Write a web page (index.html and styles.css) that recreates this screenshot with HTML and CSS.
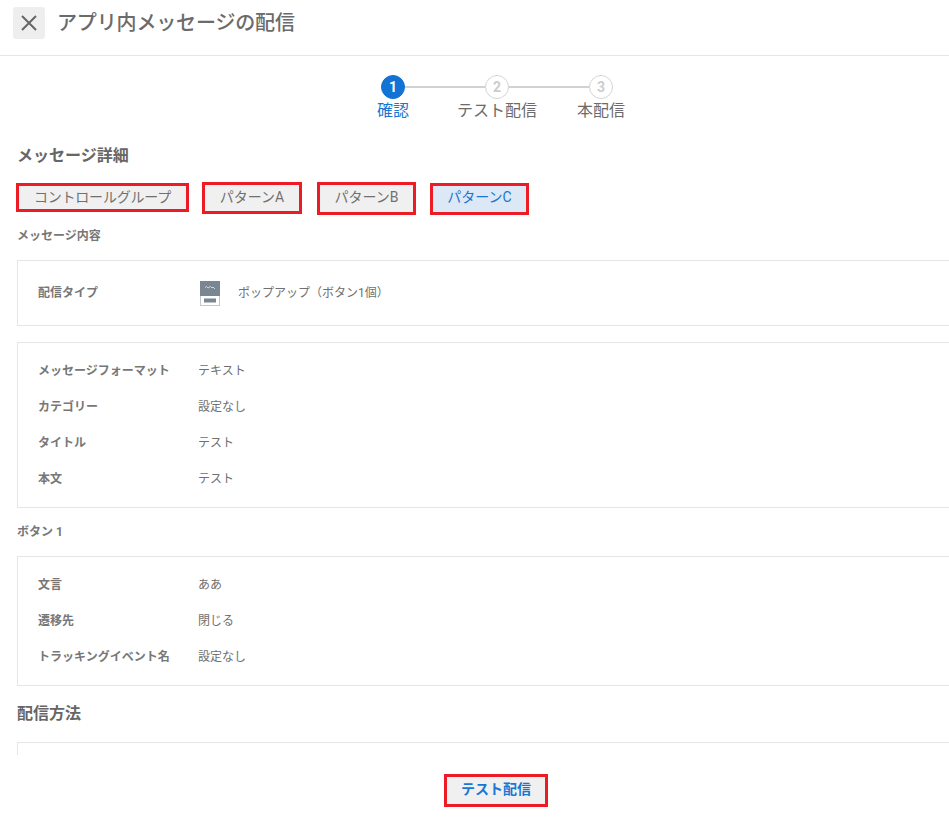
FILE: index.html
```html
<!DOCTYPE html>
<html lang="ja">
<head>
<meta charset="utf-8">
<title>アプリ内メッセージの配信</title>
<link rel="stylesheet" href="styles.css">
</head>
<body>
<div class="app">
  <header class="header">
    <button class="close" aria-label="閉じる">
      <svg width="18" height="18" viewBox="0 0 18 18"><path d="M2 2L16 16M16 2L2 16" fill="none" stroke="#666" stroke-width="2"/></svg>
    </button>
    <h1 class="title">アプリ内メッセージの配信</h1>
  </header>
  <main class="main">
    <ol class="stepper">
      <li class="step step-active"><span class="dot">1</span><span class="step-label">確認</span></li>
      <li class="step"><span class="dot">2</span><span class="step-label">テスト配信</span></li>
      <li class="step"><span class="dot">3</span><span class="step-label">本配信</span></li>
    </ol>
    <h2 class="section-title">メッセージ詳細</h2>
    <div class="tabs">
      <button class="tab tab-control">コントロールグループ</button>
      <button class="tab tab-a">パターンA</button>
      <button class="tab tab-b">パターンB</button>
      <button class="tab tab-c">パターンC</button>
    </div>
    <h3 class="sub-title sub-content">メッセージ内容</h3>
    <section class="card card-type">
      <div class="row">
        <div class="label">配信タイプ</div>
        <div class="value value-type">
          <svg class="type-icon" width="20" height="25" viewBox="0 0 20 25">
            <rect x="0.5" y="0.5" width="19" height="24" fill="#fff" stroke="#c4c8cc"/>
            <rect x="0" y="0" width="20" height="15" fill="#7a8792"/>
            <path d="M5 6.5L6.5 5.5L8 7L10.5 5.5L12 7L13 6L15 8" fill="none" stroke="#e4e7e9" stroke-width="0.8"/>
            <rect x="4" y="17.5" width="12" height="4" fill="#7a8792"/>
          </svg>
          <span>ポップアップ（ボタン1個）</span>
        </div>
      </div>
    </section>
    <section class="card card-format">
      <div class="row"><div class="label">メッセージフォーマット</div><div class="value">テキスト</div></div>
      <div class="row"><div class="label">カテゴリー</div><div class="value">設定なし</div></div>
      <div class="row"><div class="label">タイトル</div><div class="value">テスト</div></div>
      <div class="row"><div class="label">本文</div><div class="value">テスト</div></div>
    </section>
    <h3 class="sub-title sub-button">ボタン 1</h3>
    <section class="card card-button">
      <div class="row"><div class="label">文言</div><div class="value">ああ</div></div>
      <div class="row"><div class="label">遷移先</div><div class="value">閉じる</div></div>
      <div class="row"><div class="label">トラッキングイベント名</div><div class="value">設定なし</div></div>
    </section>
    <h2 class="section-title section-method">配信方法</h2>
    <section class="card card-method"></section>
  </main>
  <footer class="footer">
    <button class="primary">テスト配信</button>
  </footer>
</div>
</body>
</html>
```
FILE: styles.css
```css
* { box-sizing: border-box; }
html, body { margin: 0; height: 100%; overflow: hidden; background: #fff; }
body { font-family: Roboto, "Noto Sans CJK JP", sans-serif; color: #666; width: 949px; }
.app { width: 994px; height: 822px; display: flex; flex-direction: column; overflow: hidden; }
.header { height: 56px; flex: none; display: flex; align-items: center; gap: 13px; padding: 0 0 9px 13px; border-bottom: 1px solid #e6e6e6; }
.close { width: 32px; height: 32px; padding: 0; border: 0; border-radius: 3px; background: #eee; display: flex; align-items: center; justify-content: center; }
.title { margin: 0 0 0 -1px; font-size: 20px; line-height: 28px; font-weight: 500; color: #6b6b6b; letter-spacing: -0.15px; }
.main { flex: 1; min-height: 0; overflow: hidden; padding: 19px 0 0 17px; }
.stepper { list-style: none; margin: 0 0 0 -17px; padding: 0; display: flex; justify-content: center; }
.step { width: 104px; display: flex; flex-direction: column; align-items: center; position: relative; }
.step:not(:last-child)::after { content: ""; position: absolute; top: 11px; left: 52px; width: 104px; height: 2px; background: #d0d3d6; }
.dot { width: 24px; height: 24px; border-radius: 50%; border: 1px solid #d5d5d5; background: #fff; color: #ccc; font-size: 14px; font-weight: 700; display: flex; align-items: center; justify-content: center; position: relative; z-index: 1; }
.step-active .dot { background: #1273d4; border-color: #1273d4; color: #fff; }
.step-label { font-size: 16px; line-height: 24px; white-space: nowrap; color: #6b6b6b; }
.step-active .step-label { color: #1976d2; }
.section-title { margin: 21px 0 0; font-size: 16px; line-height: 24px; font-weight: 700; color: #666; }
.tabs { display: flex; align-items: flex-start; margin: 14px 0 0 -1px; }
.tab { border: 3px solid #ed1c24; background: #f0f0f0; color: #707070; font: inherit; font-size: 14px; padding: 0 0 5px; }
.tab-control { width: 173px; height: 29px; margin-top: 1px; letter-spacing: -0.2px; padding-bottom: 3px; }
.tab-a { width: 100px; height: 32px; margin-left: 13px; }
.tab-b { width: 99px; height: 33px; margin-left: 15px; }
.tab-c { width: 99px; height: 32px; margin: 1px 0 0 14px; background: #dce8f5; color: #1976d2; padding-bottom: 7px; }
.sub-title { margin: 0; font-size: 12px; line-height: 18px; font-weight: 700; color: #777; }
.sub-content { margin-top: 12px; }
.card { border: 1px solid #e6e6e6; padding: 8px 20px 11px; margin-top: 16px; }
.card-type { margin-top: 15px; height: 66px; padding-top: 0; padding-bottom: 4px; display: flex; align-items: center; }
.card-format { margin-top: 16px; padding-bottom: 12px; }
.sub-button { margin-top: 15px; }
.card-button { margin-top: 15px; padding-bottom: 12px; }
.row { height: 36px; display: flex; align-items: center; font-size: 12px; width: 100%; }
.label { width: 160px; flex: none; font-weight: 700; color: #777; white-space: nowrap; }
.value { color: #707070; }
.value-type { display: flex; align-items: center; }
.type-icon { margin: 4px 18px 0 2px; flex: none; }
.section-method { margin-top: 16px; }
.card-method { height: 60px; margin-top: 16px; }
.footer { height: 67px; flex: none; background: #fff; display: flex; justify-content: center; padding-top: 19px; }
.primary { width: 104px; height: 33px; margin-right: 2px; border: 3px solid #ed1c24; background: #f0f0f0; color: #1976d2; font: inherit; font-size: 14px; font-weight: 700; padding: 0 0 6px; }
```
